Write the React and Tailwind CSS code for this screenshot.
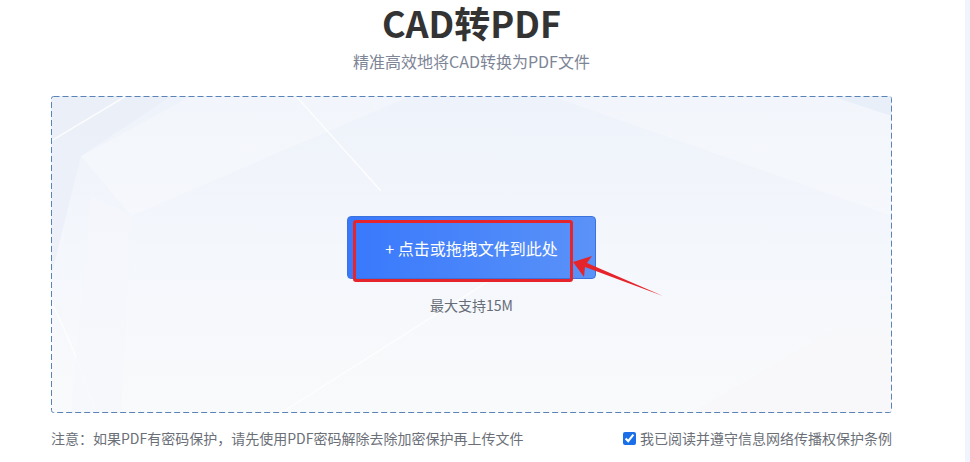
import React from "react";

export default function App() {
  return (
    <div className="relative w-[970px] h-[462px] bg-white overflow-hidden flex">
      <div className="w-[965px] h-full font-['Noto_Sans_CJK_SC',sans-serif]">
        <div className="ml-[51px] w-[841px] flex flex-col">
          <h1 className="h-[42px] leading-[44px] text-[36px] font-bold text-[#333333] text-center">CAD转PDF</h1>
          <p className="mt-[7px] h-[24px] leading-[24px] text-[16px] text-[#7d8596] text-center">精准高效地将CAD转换为PDF文件</p>
          <div className="relative mt-[23px] h-[317px] rounded-[2px] bg-gradient-to-b from-[#eef2fa] via-[#f4f7fc] to-[#f9fafb] overflow-hidden">
            <svg className="absolute inset-0" width="841" height="317" viewBox="0 0 841 317">
              <polygon points="0,0 120,0 30,60 0,180" fill="#e9eef7" opacity="0.7" />
              <polygon points="30,60 140,0 360,0 80,120" fill="#ffffff" opacity="0.25" />
              <path d="M0,45 L75,0" fill="none" stroke="#ffffff" strokeWidth="1.5" opacity="0.8" />
              <path d="M245,0 L330,95" fill="none" stroke="#ffffff" strokeWidth="1.2" opacity="0.9" />
              <path d="M45,317 C30,270 15,235 0,205" fill="none" stroke="#ffffff" strokeWidth="1.5" opacity="0.7" />
              <polygon points="40,100 80,120 70,317 20,317" fill="#f5f7fb" opacity="0.6" />
              <path d="M230,317 L540,120" fill="none" stroke="#ffffff" strokeWidth="1.2" opacity="0.8" />
              <polygon points="500,0 841,0 841,120" fill="#ffffff" opacity="0.25" />
              <polygon points="780,0 841,0 841,20" fill="#e6edf8" opacity="0.8" />
              <polygon points="640,317 841,200 841,317" fill="#f7f8fa" opacity="0.8" />
            </svg>
            <svg className="absolute inset-0 pointer-events-none" width="841" height="317" viewBox="0 0 841 317">
              <rect x="0.5" y="0.5" width="840" height="316" rx="2" fill="none" stroke="#5a84b6" strokeWidth="1" strokeDasharray="6 3" />
            </svg>
            <div className="relative flex flex-col items-center pt-[120px]">
              <button className="w-[249px] h-[63px] rounded-[4px] border border-[#3b72dc] bg-gradient-to-r from-[#3878fc] to-[#5a92f8] text-white text-[16px] leading-[24px]">
                + 点击或拖拽文件到此处
              </button>
              <p className="mt-[16px] h-[20px] leading-[20px] text-[14px] text-[#666c78]">最大支持15M</p>
            </div>
          </div>
          <div className="mt-[15px] h-[20px] flex items-center justify-between text-[14px] leading-[20px] text-[#6b6f78]">
            <span>注意：如果PDF有密码保护，请先使用PDF密码解除去除加密保护再上传文件</span>
            <label className="flex items-center">
              <input type="checkbox" defaultChecked className="w-[13px] h-[13px] m-0 mr-[4px] accent-[#1a6fe8]" />
              <span>我已阅读并遵守信息网络传播权保护条例</span>
            </label>
          </div>
        </div>
      </div>
      <div className="w-[5px] h-full bg-[#f1f4fd]" />

      <div className="absolute left-[353px] top-[220px] w-[220px] h-[62px] border-[3px] border-[#e5252b] rounded-[3px] pointer-events-none" />
      <svg className="absolute left-0 top-0 pointer-events-none" width="970" height="462" viewBox="0 0 970 462">
        <polygon points="573,262 592,256 587,263 663,296 585,267 584,277" fill="#e5252b" />
      </svg>
    </div>
  );
}
